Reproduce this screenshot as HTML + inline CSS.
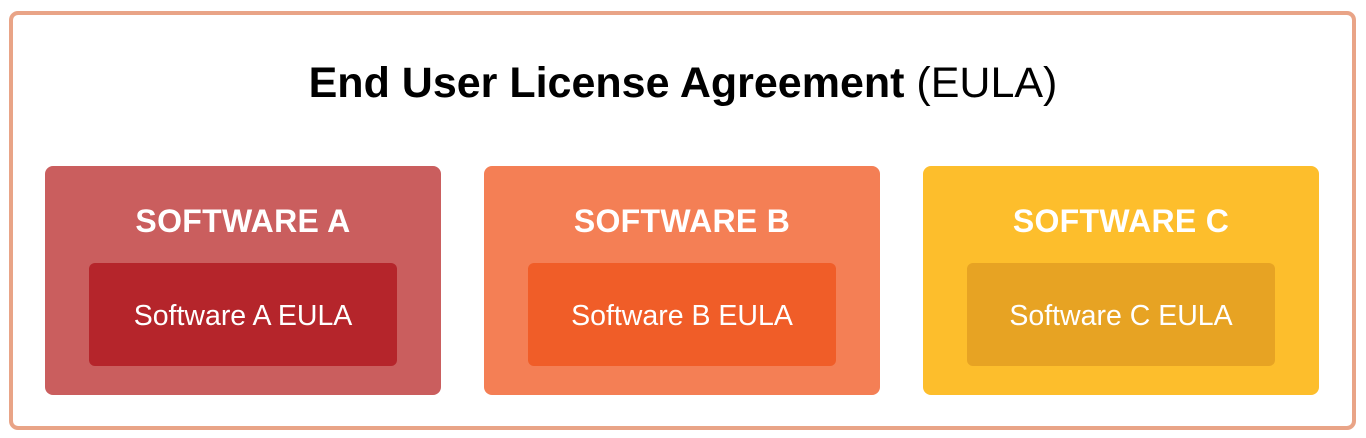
<!DOCTYPE html>
<html><head><style>
body{margin:0;width:1366px;height:438px;background:#fff;font-family:"Liberation Sans",sans-serif;position:relative;overflow:hidden}
.outer{position:absolute;left:9px;top:11px;width:1339px;height:411px;border:4px solid #e9a487;border-radius:9px}
.title{position:absolute;left:0;width:1366px;top:53px;text-align:center;font-size:43px;color:#000;line-height:60px}
.title b{font-weight:bold}
.box{position:absolute;top:166px;width:396px;height:229px;border-radius:8px}
.box h2{margin:0;position:absolute;width:100%;text-align:center;color:#fff;font-size:32px;font-weight:bold;line-height:48px;top:31px;letter-spacing:0.3px}
.inner{position:absolute;left:44px;top:97px;width:308px;height:103px;border-radius:6px;color:#fff;font-size:28.5px;text-align:center;line-height:106px}
</style></head><body>
<div class="outer"></div>
<div class="title"><b>End User License Agreement</b> (EULA)</div>
<div class="box" style="left:45px;background:#ca5e5e"><h2>SOFTWARE A</h2><div class="inner" style="background:#b5252b">Software A EULA</div></div>
<div class="box" style="left:484px;background:#f47f55"><h2>SOFTWARE B</h2><div class="inner" style="background:#f05d28">Software B EULA</div></div>
<div class="box" style="left:923px;background:#fdbe2c"><h2>SOFTWARE C</h2><div class="inner" style="background:#e7a323">Software C EULA</div></div>
</body></html>
